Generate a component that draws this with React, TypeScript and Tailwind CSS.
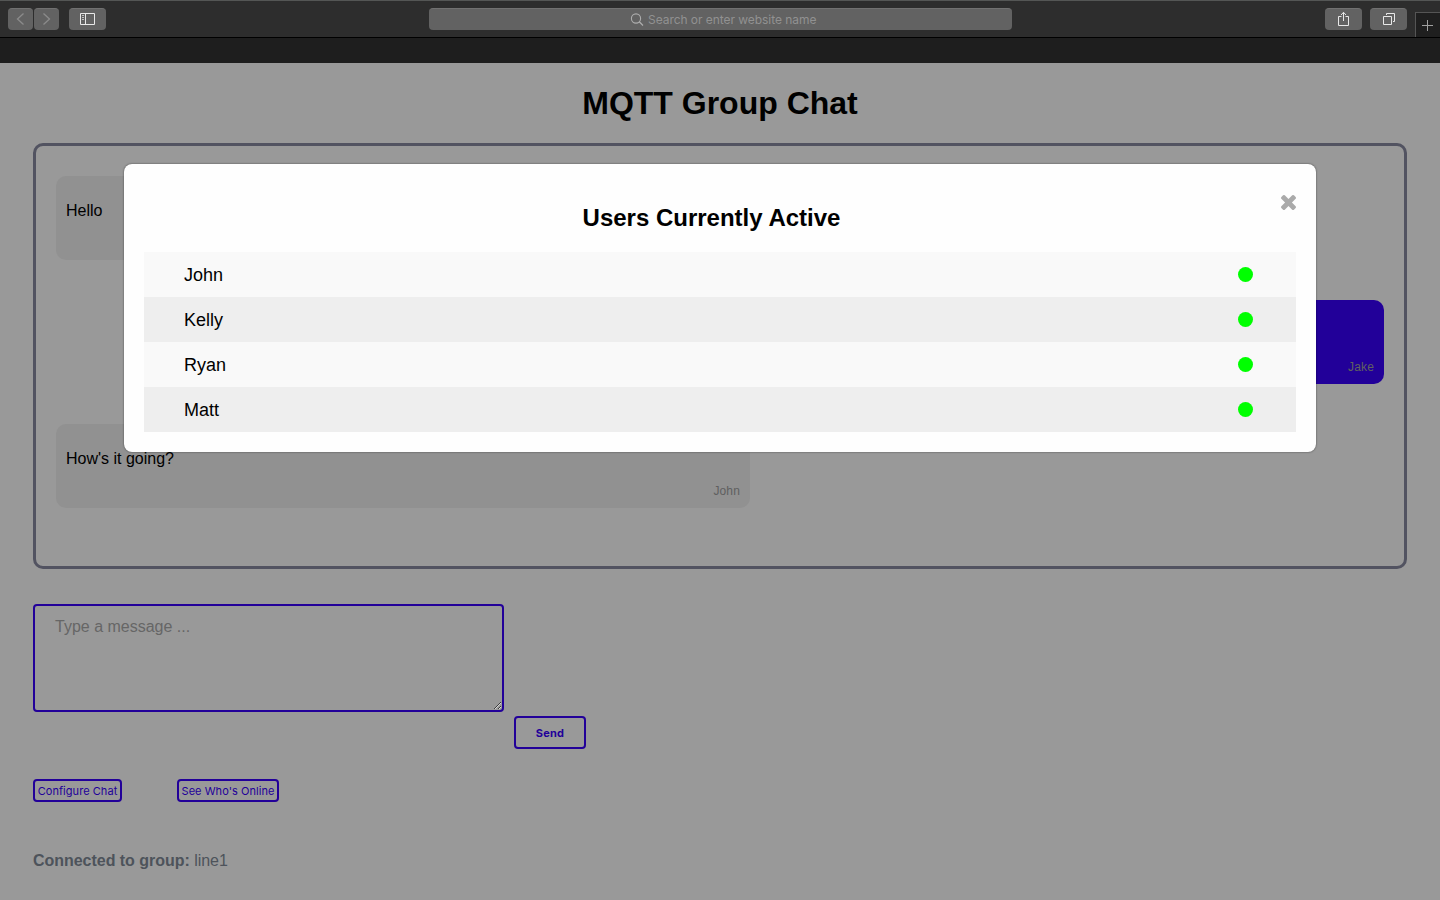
import type { ReactNode } from "react";

const users = ["John", "Kelly", "Ryan", "Matt"];

function ToolButton({ className, children }: { className: string; children: ReactNode }) {
  return (
    <button
      className={`flex h-[22px] shrink-0 items-center justify-center rounded-[4px] border-t border-[#717171] bg-[#626262] ${className}`}
    >
      {children}
    </button>
  );
}

function BrowserBar() {
  return (
    <header className="h-[63px] bg-[#1e1e1e]">
      <div className="flex h-[38px] items-start border-t border-b border-t-[#545655] border-b-black bg-[#2d2d2d] pt-[7px] pl-2">
        <ToolButton className="w-[25px]">
          <svg width="9" height="14" viewBox="0 0 9 14" fill="none" stroke="#8b8b8b" strokeWidth="1.3" className="mb-px">
            <path d="M7.5 1.5 1.5 7l6 5.5" />
          </svg>
        </ToolButton>
        <ToolButton className="ml-px w-[25px]">
          <svg width="9" height="14" viewBox="0 0 9 14" fill="none" stroke="#8b8b8b" strokeWidth="1.3" className="mb-px">
            <path d="M1.5 1.5 7.5 7l-6 5.5" />
          </svg>
        </ToolButton>
        <ToolButton className="ml-[10px] w-[37px]">
          <svg width="15" height="12" viewBox="0 0 15 12" fill="none" stroke="#e8e8e8" className="mb-px">
            <path d="M.5 .5h14v11H.5zM5.5 .5v11" />
            <path d="M2 2.5h2M2 4.5h2M2 6.5h2" stroke="#c2c2c2" />
          </svg>
        </ToolButton>
        <div className="ml-[323px] flex h-[22px] w-[583px] items-center rounded-[4px] border-t border-[#717171] bg-[#626262] pl-[201px]">
          <svg width="14" height="14" viewBox="0 0 14 14" fill="none" stroke="#adadad" strokeWidth="1.1">
            <circle cx="6" cy="5.5" r="4.6" />
            <path d="m9.3 8.8 3.7 3.7" strokeWidth="1.3" />
          </svg>
          <span className="ml-1 text-[12px] leading-[14px] tracking-[-0.05px] text-[#919191]">
            Search or enter website name
          </span>
        </div>
        <ToolButton className="ml-[313px] w-[37px]">
          <svg width="13" height="16" viewBox="0 0 13 16" fill="none" stroke="#e8e8e8" className="mb-px">
            <path d="M4.5 5.5h-3v9h10v-9h-3M6.5 10V1.5M4 4l2.5-2.7L9 4" />
          </svg>
        </ToolButton>
        <ToolButton className="ml-2 w-[37px]">
          <svg width="12" height="12" viewBox="0 0 12 12" fill="none" stroke="#e8e8e8" className="mb-px">
            <path d="M.5 3.5h8v8h-8zM3.5 2V.5h8v8H10" />
          </svg>
        </ToolButton>
        <div className="mt-1 ml-2 flex h-[25px] w-[25px] items-center border-t border-l border-[#555] bg-[#1f1f1f] pl-[6px]">
          <svg width="11" height="11" viewBox="0 0 11 11" stroke="#a0a0a0">
            <path d="M0 5.5h11M5.5 0v11" />
          </svg>
        </div>
      </div>
    </header>
  );
}

function Message({ text, author, own }: { text: string; author: string; own?: boolean }) {
  return (
    <div
      className={`flex h-[84px] w-[694px] flex-col justify-between rounded-[10px] px-[10px] pt-[26px] pb-[9px] ${
        own ? "self-end bg-[#220099] text-[#999]" : "bg-[#919191] text-black"
      }`}
    >
      <p className="text-base leading-[18px]">{text}</p>
      <span className="self-end text-[12px] leading-4 tracking-[0.15px] text-[#606060]">{author}</span>
    </div>
  );
}

function UsersDialog() {
  return (
    <section
      role="dialog"
      className="absolute top-[164px] left-[124px] h-[288px] w-[1192px] rounded-[8px] bg-[#fefefe] px-5 shadow-[0_0_2px_rgba(0,0,0,0.6)]"
    >
      <div className="flex h-[88px] items-start">
        <h2 className="flex-1 pt-10 pr-[1px] text-center text-[24px] leading-[28px] font-bold">
          Users Currently Active
        </h2>
        <button aria-label="Close" className="mt-[31px] w-[16px]">
          <svg width="15" height="15" viewBox="302 366 1188 1188" fill="#aaa" className="ml-auto">
            <path d="M1490 1322q0 40-28 68l-136 136q-28 28-68 28t-68-28l-294-294-294 294q-28 28-68 28t-68-28l-136-136q-28-28-28-68t28-68l294-294-294-294q-28-28-28-68t28-68l136-136q28-28 68-28t68 28l294 294 294-294q28-28 68-28t68 28l136 136q28 28 28 68t-28 68l-294 294 294 294q28 28 28 68z" />
          </svg>
        </button>
      </div>
      <ul>
        {users.map((name) => (
          <li
            key={name}
            className="flex h-[45px] items-center justify-between pr-[43px] pl-10 text-[18px] odd:bg-[#f9f9f9] even:bg-[#eee]"
          >
            <span className="pt-[2px]">{name}</span>
            <span className="h-[15px] w-[15px] rounded-full bg-[#00ff00]" />
          </li>
        ))}
      </ul>
    </section>
  );
}

export default function App() {
  return (
    <div className="relative h-[900px] w-[1440px] overflow-hidden bg-[#999] font-['Liberation_Sans',Arial,sans-serif] text-black">
      <div className="font-['Inter',sans-serif]">
        <BrowserBar />
      </div>
      <main className="px-[33px] pt-[22px]">
        <h1 className="text-center text-[32px] leading-[37px] font-bold">MQTT Group Chat</h1>
        <div className="mt-[21px] flex h-[426px] flex-col gap-10 rounded-[10px] border-[3px] border-[#525361] px-5 pt-[30px]">
          <Message text="Hello" author="John" />
          <Message text="Hi" author="Jake" own />
          <Message text="How's it going?" author="John" />
        </div>
        <div className="mt-[35px] flex h-[145px] items-end gap-[10px]">
          <textarea
            placeholder="Type a message ..."
            className="h-[108px] w-[471px] resize self-start rounded-[4px] border-2 border-[#220099] bg-transparent px-5 py-[12px] text-base leading-[18px] outline-none placeholder:text-[#666]"
          />
          <button className="h-[33px] w-[72px] rounded-[4px] border-2 border-[#220099] pt-[2px] font-['Inter',sans-serif] text-[11px] font-bold tracking-[0.2px] text-[#220099]">
            Send
          </button>
        </div>
        <div className="mt-[30px] flex gap-[55px] font-['Inter',sans-serif] text-[11px] leading-[18px] tracking-[0.05px] whitespace-nowrap text-[#220099]">
          <button className="h-[23px] w-[89px] rounded-[4px] border-2 border-[#220099] pt-px">Configure Chat</button>
          <button className="h-[23px] w-[102px] rounded-[4px] border-2 border-[#220099] pt-px">See Who's Online</button>
        </div>
        <p className="mt-[50px] text-base leading-[18px] tracking-[-0.03px] text-[#4d535b]">
          <b>Connected to group:</b> line1
        </p>
      </main>
      <UsersDialog />
    </div>
  );
}
